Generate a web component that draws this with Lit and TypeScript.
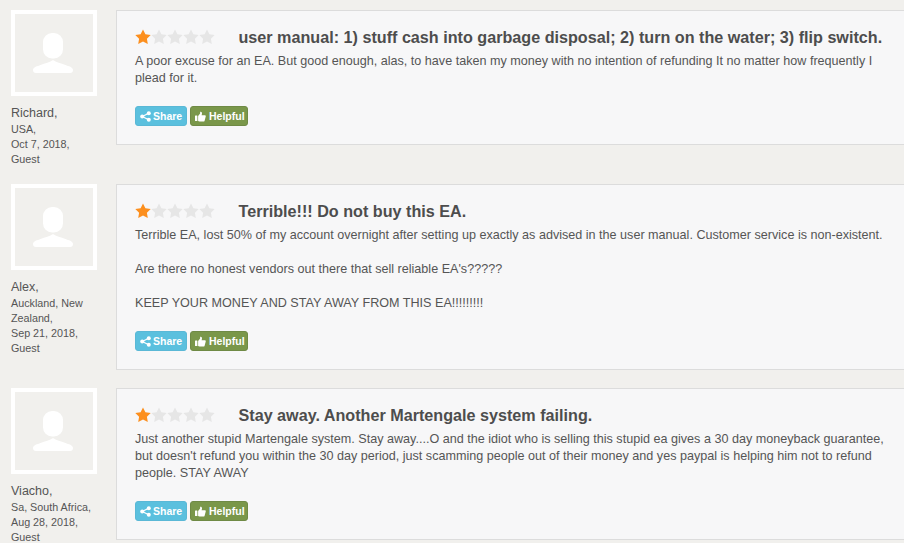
import { LitElement, html, css, svg } from "lit";
import { customElement } from "lit/decorators.js";

const STAR = "M8 .5l2.4 4.8 5.3.8-3.8 3.7.9 5.3L8 12.6l-4.800 2.500.9-5.300L.3 6.100l5.300-.8z";

const reviews = [
  {
    name: "Richard,",
    meta: ["USA,", "Oct 7, 2018,", "Guest"],
    title: "user manual: 1) stuff cash into garbage disposal; 2) turn on the water; 3) flip switch.",
    paras: ["A poor excuse for an EA. But good enough, alas, to have taken my money with no intention of refunding It no matter how frequently I plead for it."],
  },
  {
    name: "Alex,",
    meta: ["Auckland, New Zealand,", "Sep 21, 2018,", "Guest"],
    title: "Terrible!!! Do not buy this EA.",
    paras: [
      "Terrible EA, lost 50% of my account overnight after setting up exactly as advised in the user manual. Customer service is non-existent.",
      "Are there no honest vendors out there that sell reliable EA's?????",
      "KEEP YOUR MONEY AND STAY AWAY FROM THIS EA!!!!!!!!!",
    ],
  },
  {
    name: "Viacho,",
    meta: ["Sa, South Africa,", "Aug 28, 2018,", "Guest"],
    title: "Stay away. Another Martengale system failing.",
    paras: ["Just another stupid Martengale system. Stay away....O and the idiot who is selling this stupid ea gives a 30 day moneyback guarantee, but doesn't refund you within the 30 day period, just scamming people out of their money and yes paypal is helping him not to refund people. STAY AWAY"],
  },
];

@customElement("app-root")
export class AppRoot extends LitElement {
  static styles = css`
    :host {
      display: block;
      width: 904px;
      height: 543px;
      overflow: hidden;
      background: #f1f0ed;
      font-family: "Liberation Sans", Arial, sans-serif;
      color: #555;
    }
    .list {
      width: 920px;
      padding: 10px 0 0 11px;
      box-sizing: content-box;
    }
    .row {
      display: flex;
      align-items: flex-start;
      gap: 19px;
    }
    .side {
      flex: 0 0 86px;
      width: 86px;
      margin-bottom: 17px;
    }
    .avatar {
      display: block;
      width: 86px;
      height: 86px;
    }
    .name {
      font-size: 12.5px;
      line-height: 16px;
      margin-top: 9px;
    }
    .meta {
      font-size: 10.75px;
      line-height: 15px;
      margin-top: 1px;
    }
    .card {
      flex: 1 1 0;
      min-width: 0;
      box-sizing: border-box;
      background: #f7f7f8;
      border: 1px solid #dcdcdc;
      margin-bottom: 18px;
      padding: 16px 34px 18px 18px;
    }
    .head {
      display: flex;
      align-items: center;
      height: 20px;
    }
    .stars {
      display: flex;
      flex: 0 0 80px;
      width: 80px;
    }
    .stars svg {
      display: block;
      width: 16px;
      height: 16px;
    }
    .title {
      font-size: 16.17px;
      font-weight: bold;
      line-height: 20px;
      margin-left: 23.5px;
      white-space: nowrap;
      color: #4d4d4d;
    }
    .body {
      margin-top: 6px;
      font-size: 12.6px;
      line-height: 17px;
      width: 756px;
      color: #555;
    }
    .body p {
      margin: 0 0 17px;
    }
    .body p:last-child {
      margin: 0;
    }
    .actions {
      display: flex;
      gap: 3px;
      margin-top: 19px;
    }
    .btn {
      display: flex;
      align-items: center;
      height: 20px;
      box-sizing: border-box;
      border-radius: 3px;
      border: 1px solid;
      color: #fff;
      font-size: 10.5px;
      font-weight: bold;
      white-space: nowrap;
    }
    .btn svg {
      display: block;
      width: 11px;
      height: 11px;
      fill: #fff;
    }
    .share {
      width: 52px;
      padding-left: 4px;
      gap: 2px;
      background: #5bc0de;
      border-color: #5ab8d6;
    }
    .helpful {
      width: 58px;
      padding-left: 4px;
      gap: 3px;
      background: #7a974a;
      border-color: #6f8a45;
    }
  `;

  private star(on: boolean) {
    return html`<svg viewBox="0 0 16 16"><path d=${STAR} fill=${on ? "#fc8f1e" : "#e6e6e6"}></path></svg>`;
  }

  private avatar() {
    return svg`<svg class="avatar" viewBox="0 0 86 86">
      <rect width="86" height="86" fill="#fff"></rect>
      <rect x="4" y="4" width="78" height="78" fill="#f1f0ed"></rect>
      <rect x="32" y="23" width="20" height="25.500" rx="9" fill="#fff"></rect>
      <path d="M42 50c3 2.500 8 3 12.500 5 3 1.300 7.500 2 7.500 5 0 2-1 3-3 3H25c-2 0-3-1-3-3 0-3 4.500-3.700 7.500-5 4.500-2 9.500-2.500 12.500-5z" fill="#fff"></path>
    </svg>`;
  }

  private shareIcon() {
    return html`<svg viewBox="0 0 11 11">
      <circle cx="2.200" cy="5.500" r="2"></circle>
      <circle cx="8.800" cy="2.200" r="2"></circle>
      <circle cx="8.800" cy="8.800" r="2"></circle>
      <path d="M2.200 5.500L8.800 2.200M2.200 5.500L8.800 8.800" stroke="#fff" stroke-width="1.200"></path>
    </svg>`;
  }

  private thumbIcon() {
    return html`<svg viewBox="0 0 12 11">
      <rect x="0" y="4.500" width="2.600" height="6" rx=".4"></rect>
      <path d="M3.400 5 5.600 2.200V.4c1.300-.3 2.300.6 2 2.100L7.200 4h3.400c.9 0 1.400.8 1.100 1.500L10.500 10c-.2.600-.6 1-1.300 1H5c-.7 0-1.100-.4-1.600-.6z"></path>
    </svg>`;
  }

  render() {
    return html`<div class="list">
      ${reviews.map(
        (r) => html`<div class="row">
          <div class="side">
            ${this.avatar()}
            <div class="name">${r.name}</div>
            <div class="meta">${r.meta.map((m) => html`<div>${m}</div>`)}</div>
          </div>
          <div class="card">
            <div class="head">
              <div class="stars">${[0, 1, 2, 3, 4].map((i) => this.star(i === 0))}</div>
              <div class="title">${r.title}</div>
            </div>
            <div class="body">${r.paras.map((p) => html`<p>${p}</p>`)}</div>
            <div class="actions">
              <div class="btn share">${this.shareIcon()}Share</div>
              <div class="btn helpful">${this.thumbIcon()}Helpful</div>
            </div>
          </div>
        </div>`
      )}
    </div>`;
  }
}
